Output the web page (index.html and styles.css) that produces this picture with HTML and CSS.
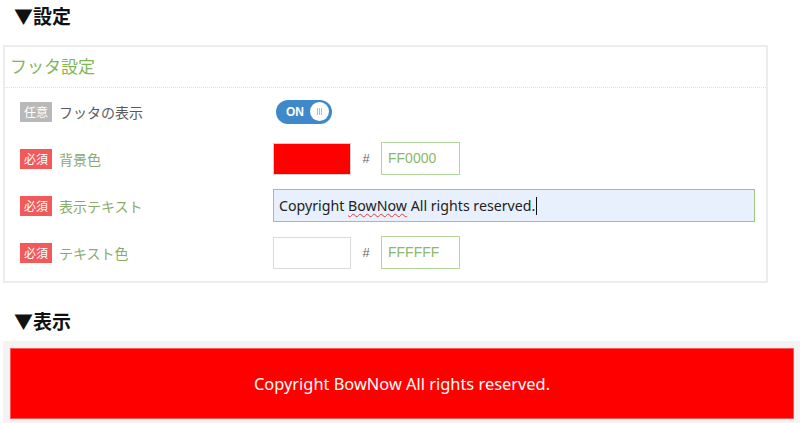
FILE: index.html
```html
<!DOCTYPE html>
<html lang="ja">
<head>
    <meta charset="UTF-8">
    <meta name="viewport" content="width=device-width, initial-scale=1.0">
    <title>フッタ設定</title>
    <link rel="stylesheet" href="styles.css">
</head>
<body>
    <!-- SETTINGS -->
    <h2 class="section-title">▼設定</h2>
    <div class="panel">
        <div class="panel-head">フッタ設定</div>
        <div class="panel-body">
            <div class="row">
                <div class="row-label">
                    <span class="badge badge-optional">任意</span>
                    <span class="label-text muted">フッタの表示</span>
                </div>
                <div class="row-control">
                    <div class="toggle">
                        <span class="toggle-text">ON</span>
                        <span class="toggle-knob"><i></i><i></i><i></i></span>
                    </div>
                </div>
            </div>
            <div class="row">
                <div class="row-label">
                    <span class="badge badge-required">必須</span>
                    <span class="label-text">背景色</span>
                </div>
                <div class="row-control">
                    <div class="swatch swatch-red"></div>
                    <span class="hash">#</span>
                    <div class="hex-input">FF0000</div>
                </div>
            </div>
            <div class="row">
                <div class="row-label">
                    <span class="badge badge-required">必須</span>
                    <span class="label-text">表示テキスト</span>
                </div>
                <div class="row-control">
                    <div class="text-input">Copyright <span class="typo">BowNow</span> All rights reserved.<span class="caret"></span></div>
                </div>
            </div>
            <div class="row">
                <div class="row-label">
                    <span class="badge badge-required">必須</span>
                    <span class="label-text">テキスト色</span>
                </div>
                <div class="row-control">
                    <div class="swatch swatch-white"></div>
                    <span class="hash">#</span>
                    <div class="hex-input">FFFFFF</div>
                </div>
            </div>
        </div>
    </div>

    <!-- PREVIEW -->
    <h2 class="section-title section-preview">▼表示</h2>
    <div class="preview">
        <div class="footer-bar">Copyright BowNow All rights reserved.</div>
    </div>
</body>
</html>
```

FILE: styles.css
```css
body {
    margin: 0;
    padding: 0;
    font-family: "Noto Sans", "Noto Sans CJK JP", sans-serif;
    color: #333;
    background: #fff;
}
.section-title {
    margin: 0;
    padding: 4px 0 0 14px;
    height: 45px;
    box-sizing: border-box;
    font-family: "Noto Sans CJK JP", sans-serif;
    font-size: 19px;
    font-weight: bold;
    line-height: 24px;
    color: #111;
}
.section-preview {
    height: 58px;
    padding-top: 26px;
}
.panel {
    margin-left: 3px;
    width: 765px;
    box-sizing: border-box;
    border: 2px solid #ececec;
}
.panel-head {
    height: 40px;
    padding: 0 0 0 5px;
    border-bottom: 1px dotted #e0e0e0;
    font-family: "Noto Sans CJK JP", sans-serif;
    font-size: 17px;
    line-height: 38px;
    color: #7fb65a;
}
.panel-body {
    display: flex;
    flex-direction: column;
    gap: 14px;
    padding: 7px 0 12px 15px;
}
.row {
    display: flex;
    align-items: center;
    height: 33px;
}
.row-label {
    width: 253px;
    display: flex;
    align-items: center;
    gap: 7px;
}
.badge {
    display: inline-block;
    width: 32px;
    height: 20px;
    font-family: "Noto Sans CJK JP", sans-serif;
    font-size: 12px;
    line-height: 20px;
    text-align: center;
    color: #fff;
}
.badge-optional {
    background: #b9b9b9;
}
.badge-required {
    background: #f25a5a;
}
.label-text {
    font-family: "Noto Sans CJK JP", sans-serif;
    font-size: 14px;
    color: #8aab6b;
}
.label-text.muted {
    color: #5a5a5a;
}
.row-control {
    display: flex;
    align-items: center;
}
.toggle {
    margin-left: 3px;
    width: 56px;
    height: 24px;
    border-radius: 12px;
    background: #3f89cb;
    display: flex;
    align-items: center;
    justify-content: space-between;
    padding: 0 3px 0 10px;
    box-sizing: border-box;
}
.toggle-text {
    font-family: "Liberation Sans", Arial, sans-serif;
    font-size: 12px;
    font-weight: bold;
    color: #fff;
}
.toggle-knob {
    width: 19px;
    height: 19px;
    border-radius: 50%;
    background: #fff;
    display: flex;
    align-items: center;
    justify-content: center;
    gap: 1px;
}
.toggle-knob i {
    width: 1px;
    height: 7px;
    background: #bbb;
}
.swatch {
    width: 78px;
    height: 32px;
    box-sizing: border-box;
    border: 1px solid #cfcfcf;
}
.swatch-red {
    background: #ff0000;
}
.swatch-white {
    background: #fff;
    border-color: #dadada;
}
.hash {
    width: 30px;
    text-align: center;
    font-family: "Liberation Sans", Arial, sans-serif;
    font-size: 13px;
    color: #666;
}
.hex-input {
    width: 79px;
    height: 33px;
    box-sizing: border-box;
    border: 1px solid #b3d49a;
    padding-left: 6px;
    font-family: "Liberation Sans", Arial, sans-serif;
    font-size: 14px;
    line-height: 31px;
    color: #8cb86c;
}
.text-input {
    width: 482px;
    height: 33px;
    box-sizing: border-box;
    border: 1px solid #9dc67f;
    background: #e8f0fd;
    padding-left: 5px;
    font-size: 14.2px;
    line-height: 31px;
    color: #222;
}
.typo {
    text-decoration: underline wavy #e53935;
    text-decoration-thickness: 1px;
    text-underline-offset: 2px;
}
.caret {
    display: inline-block;
    width: 1px;
    height: 18px;
    margin-left: 1px;
    vertical-align: -4px;
    background: #111;
}
.preview {
    margin-left: 3px;
    height: 83px;
    padding: 7px 6px 5px 7px;
    box-sizing: border-box;
    background: #f3f3f3;
}
.footer-bar {
    height: 71px;
    box-sizing: border-box;
    border: 1px solid #ff5555;
    background: #ff0000;
    color: #fff;
    font-size: 16.4px;
    line-height: 69px;
    text-align: center;
}
```
